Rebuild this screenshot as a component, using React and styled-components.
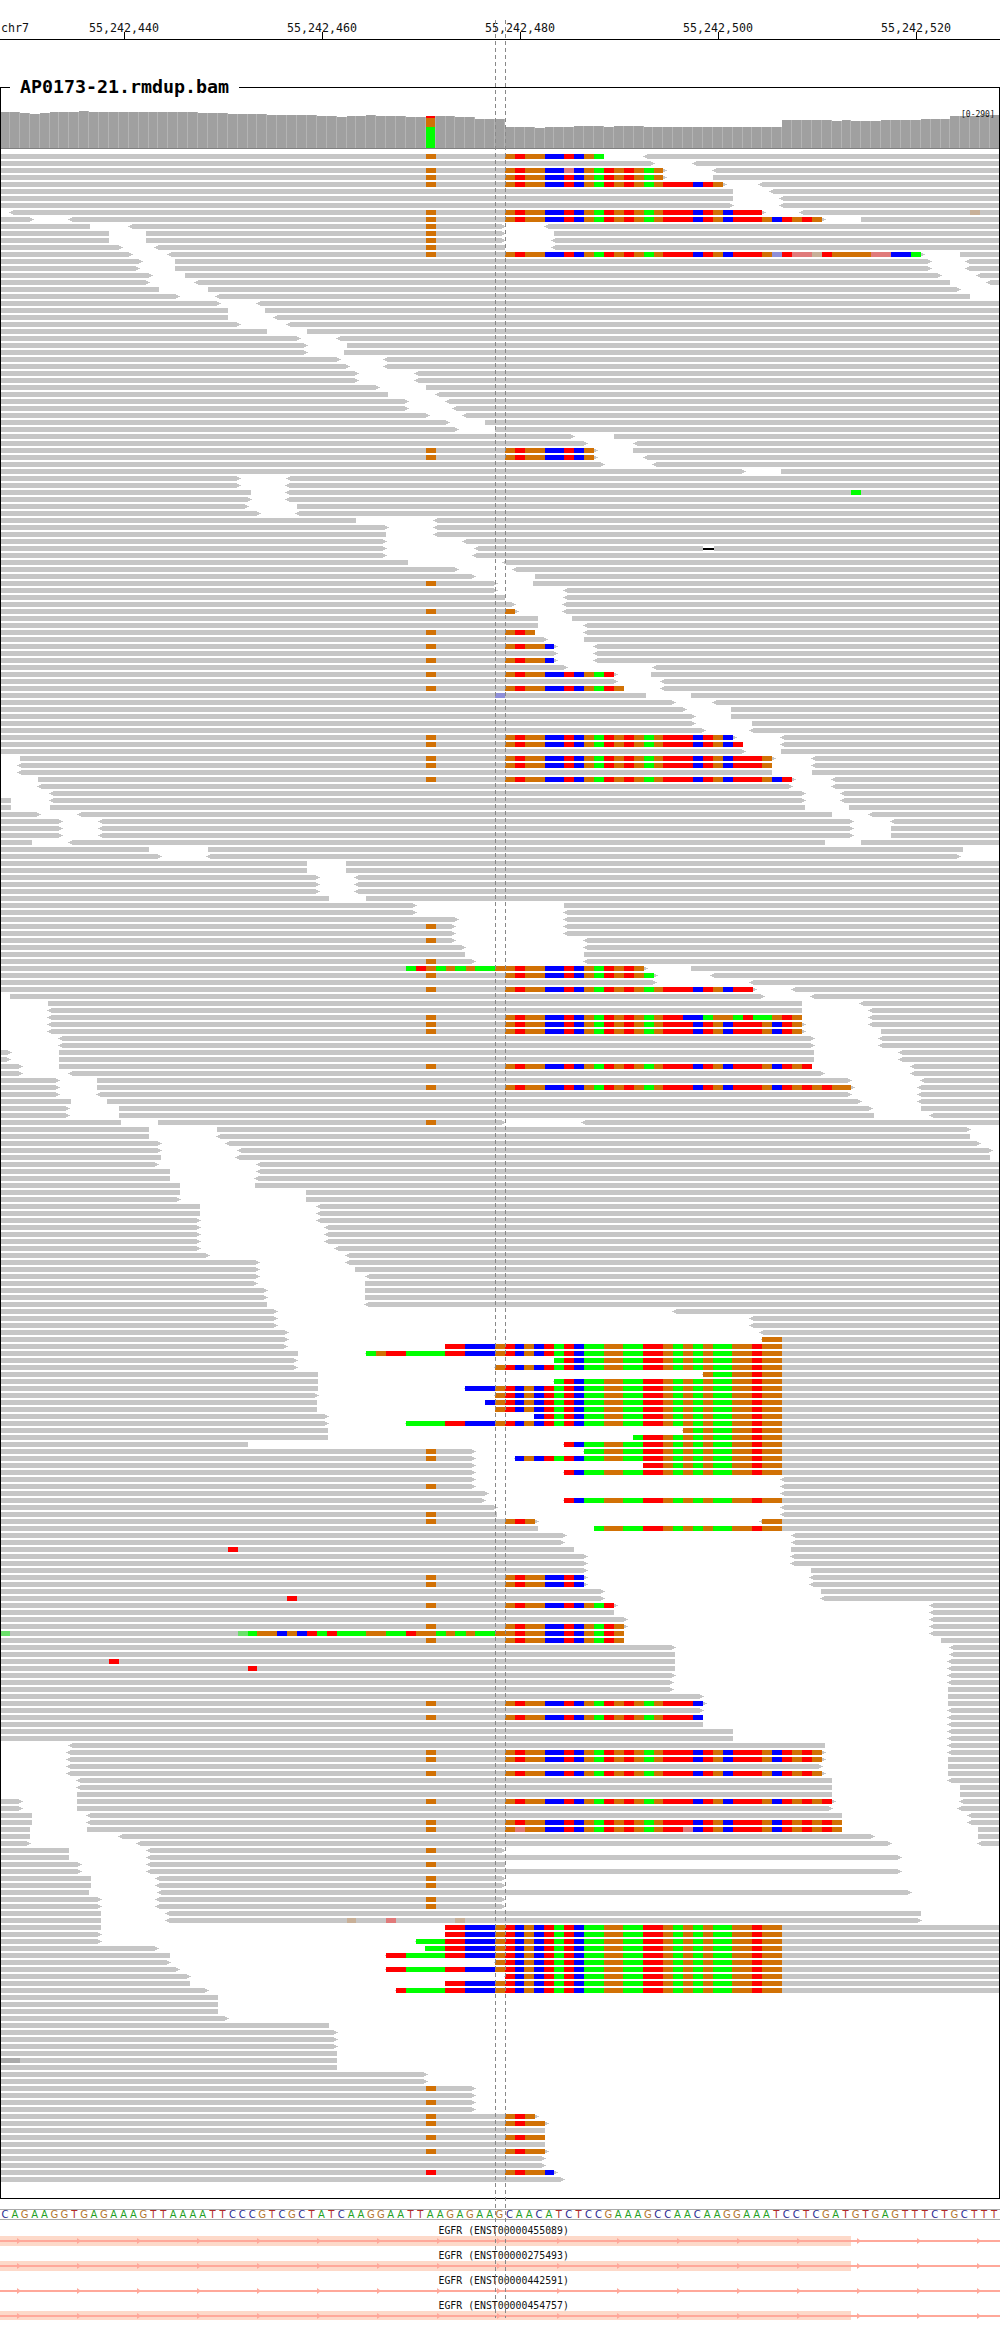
import React from "react";
import styled, { createGlobalStyle } from "styled-components";

const Global = createGlobalStyle`
  html, body { margin: 0; padding: 0; background: #fff; }
  body { font-family: "DejaVu Sans Mono", monospace; }
`;

const Page = styled.div`
  position: relative;
  width: 1000px;
  height: 2340px;
  overflow: hidden;
  background: #fff;
`;
const RulerChart = styled.svg`
  display: block;
  width: 1000px;
  height: 40px;
`;
const RulerText = styled.text`
  font: 11.63px "DejaVu Sans Mono", monospace;
  fill: #111;
`;
const Panel = styled.section`
  position: relative;
  box-sizing: border-box;
  width: 1000px;
  height: 2112px;
  margin-top: 47px;
  border: 1px solid #000;
`;
const PanelTitle = styled.h2`
  position: absolute;
  top: -13px;
  left: 9px;
  margin: 0;
  padding: 0 10px;
  background: #fff;
  font: bold 18.3px/24px "DejaVu Sans Mono", monospace;
  color: #000;
`;
const CoverageChart = styled.svg`
  display: block;
  width: 998px;
  height: 62px;
`;
const RangeLabel = styled.text`
  font: 8px "DejaVu Sans Mono", monospace;
  fill: #111;
`;
const ReadsChart = styled.svg`
  display: block;
  width: 998px;
  height: 2048px;
`;
const SeqTrack = styled.div`
  box-sizing: border-box;
  display: flex;
  width: 1000px;
  height: 11px;
  margin-top: 10px;
  border-top: 1px solid #aaa;
  border-bottom: 1px solid #aaa;
`;
const Base = styled.span`
  flex: 0 0 9.9px;
  text-align: center;
  font: 10px/9px "DejaVu Sans", sans-serif;
  color: ${(p) => p.$color};
`;
const GeneList = styled.div`
  display: flex;
  flex-direction: column;
  gap: 5px;
  margin-top: 6px;
`;
const GeneTrack = styled.div`
  display: flex;
  flex-direction: column;
`;
const GeneLabel = styled.div`
  height: 10px;
  padding-left: 438.5px;
  font: 9.85px/10px "DejaVu Sans Mono", monospace;
  color: #111;
  white-space: pre;
`;
const GeneChart = styled.svg`
  display: block;
  width: 1000px;
  height: 10px;
`;
const CursorOverlay = styled.svg`
  position: absolute;
  top: 0;
  left: 0;
  width: 1000px;
  height: 2340px;
  pointer-events: none;
`;

const C = {
  O: "#d17105",
  R: "#ff0000",
  B: "#0000ff",
  L: "#00ff00",
  P: "#e07a7a",
  N: "#c8b098",
  U: "#8f8fd8",
  D: "#aaaaaa",
  M: "#6be06b",
};

const A_SEQ = "OROOBBRBOLRO" + "ROLO" + "RRRBROB" + "RRRO" + "BROROR" + "OOOO";
const A_14 = "OROOBBRBOLRO" + "ROLO" + "RRRBROB" + "RRRO" + "URPPNR" + "OOOO" + "PPBBL";
const A_123 = "OROOBBRBOLROROLO" + "RRBBLOOLRLLORO";
const B_SEQ = "LORRLLLLRRBBBORBOBRLRBLLOOLLRROLOLOLLOORO" + "O";

const aOverride = {
  2: A_SEQ.slice(0, 6) + "P" + A_SEQ.slice(7),
  14: A_14,
  123: A_123,
  239: "OPOOBBRBOLROROLORRPBROBRRRO" + A_SEQ.slice(27),
};

const ROWS = [
  "947,1010 d a947", "1025,1087", "1040,1118 d a1040", "1040,1118 d a1040", "1134,1190 d a1134",
  "1149,1207", "1149,1223", "1149,1223", "0,16 1195,1254 d a1195", "52,108 1289,1350 d a1289",
  "141,202 792,855 d", "171,229 792,869 d", "171,229 792,866 d", "191,243 792,866 d", "207,263 1444,1505 d a1444",
  "223,274 1460,1515", "218,274 1460,1515", "238,290 1475,1532", "234,306 1490,1548", "250,326 1505,1568",
  "280,338 1521,1568", "345,403", "358,415", "358,430", "377,450",
  "419,481", "470,528", "481,544", "481,540", "533,602",
  "548,602", "562,650", "562,650", "594,668", "609,684",
  "640,699", "640,710", "672,726", "704,760", "718,776",
  "900,963", "920,994", "936,992 d a932", "936,1010 d a932", "947,1024",
  "1168,1224", "377,450", "377,448", "393,448", "393,448",
  "389,466", "407,464", "558,680", "609,680", "605,680",
  "605,726", "605,745", "605,742", "640,788", "718,804",
  "745,839", "779,836 d", "780,884", "792,884", "808,882",
  "808,882 d a808", "843,897", "843,916", "843,916 d a839", "858,916",
  "873,931 d a869", "873,931", "873,931 d a869", "889,1024", "967,1021 d a963",
  "967,1037", "983,1036 d a978", "1013,1084", "1059,1118", "1075,1146",
  "1090,1146", "1090,1179", "1106,1176", "1153,1224 d a1149", "1169,1224 d a1165",
  "1168,1224", "0,31 1214,1273 d a1210", "0,28 1210,1273 d a1210", "0,28 1210,1273", "0,60 1242,1305 d a1242",
  "0,60 1242,1305", "0,78 1262,1318", "18,78 1262,1318", "18,78 1262,1332", "63,122 1305,1363",
  "97,155 1338,1397", "97,155 1338,1397", "97,155 1338,1397", "50,108 1293,1350", "234,326 1510,1568",
  "252,324 1505,1568", "481,542", "481,542", "500,556", "500,556",
  "500,556", "516,574", "652,884", "652,884", "718,884",
  "713,884 d", "713,884", "713,916 d", "729,916", "729,915",
  "745,915 d", "1010,1084 a1010", "1028,1115 d a1025", "1028,1176", "1183,1242 d a1180",
  "0,16 1198,1272", "0,76 1258,1348", "0,76 1258,1363", "0,76 1258,1363 d a1258", "0,76 1258,1363 d a1258",
  "0,76 1258,1381 d a1258", "0,93 1277,1378", "0,93 1277,1378", "18,93 1277,1409", "16,93 1277,1409",
  "35,93 1277,1428 d a1273", "35,108 1292,1428", "93,152 1334,1444", "93,152 1334,1440 d a1334", "93,152 1334,1440",
  "112,168 1350,1440", "108,187 1368,1444", "108,187 1370,1458", "190,247 792,912 d", "234,340 1521,1568",
  "234,340 1521,1568", "252,355 1537,1568", "252,373 1556,1568", "252,370 1552,1568", "248,403",
  "266,403", "266,400", "283,400", "283,480", "283,480",
  "314,497", "314,497", "314,497", "314,510", "314,510",
  "314,510", "314,526", "328,542", "406,542", "406,556",
  "406,574", "403,572", "419,572", "419,572", "419,572",
  "434,1055", "434,1176", "434,1176", "452,1192", "452,1195 b1195",
  "450,699 b699", "468,574 b574", "466,869 b869", "466,776 b776", "499,1102 b1102",
  "499,869 b869", "499,729 b729", "499,776 b776", "497,760 b760", "497,776 b776",
  "515,839 b839", "515,637 b637", "515,1071 b1071", "515,994 b994", "389,884 b884",
  "745,916 d b916", "745,808 d b808", "745,1010 b1010", "745,884 b884", "745,1224",
  "745,1224 d", "765,1224", "760,884 b884", "779,1224", "779,1224 d",
  "843,1192 d a839 b1195", "843,931 b931", "887,1242", "884,1242", "900,1240",
  "920,1240", "920,1240", "920,1272", "916,1270 d a916", "916,1270 d a916",
  "947,1288", "947,1288", "967,1458 d a963", "963,1458", "983,1458",
  "978,1458 d a978", "978,1458 a978", "978,1475 d a978", "1059,1490", "1059,1490",
  "1059,1486", "1059,1486", "1059,1486", "1055,1486", "1055,1486",
  "1102,1486", "1102,1486 d a1102", "1102,1486", "1102,1486 d a1102", "1102,1486",
  "1149,1486", "1149,1486", "0,108 1293,1486", "0,105 1289,1486 d a1289", "0,105 1289,1486 d a1289",
  "0,105 1289,1486", "0,105 1289,1486 d a1289", "0,121 1305,1486", "0,121 1305,1505", "0,121 1305,1505",
  "35,121 1305,1505 d a1305", "35,121 1305,1502", "50,136 1320,1518", "50,136 1320,1518 d a1320", "47,136 1320,1533 d a1320",
  "47,187 1370,1533", "47,215 1397,1533", "108,230 792,1568 d", "108,230 1413,1568", "127,230 792,1568 d",
  "127,230 1413,1568", "143,245 792,1568 d", "143,245 792,1568 d", "140,248 1428,1568", "158,245 792,1568 d",
  "158,245 792,1568 d", "158,260 1444,1568", "158,260 1444,1568", "158,699 b699", "158,699 b699",
  "158,652 b652", "248,668 b668", "266,605 b605", "266,776 b776", "281,605 b605",
  "298,792 b792", "298,699 b699", "326,621 b621", "342,1568", "342,1568",
  "342,1568", "358,1568", "516,1568", "528,1568", "528,1568",
  "528,1568", "528,1568", "528,1568", "528,1568", "670,1568",
  "670,1568", "745,1568 d", "745,1568", "745,1568 d", "745,1568",
  "839,1568 d a839", "855,1568 d a855", "855,1568", "855,1568 d a855", "855,1568",
  "855,1568 d a855", "855,1568", "855,1568", "869,1568 e a869", "885,1568",
];

const EXTRAS = {
  8: [[1521, 1537, "N"]],
  48: [[1334, 1350, "L"]],
  56: [[1102, 1120, "k"]],
  77: [[776, 792, "U"]],
  116: [
    [637, 652, "L"], [652, 668, "R"], [668, 684, "O"], [684, 699, "L"], [699, 714, "O"],
    [714, 730, "L"], [730, 745, "O"], [745, 776, "L"], [776, 792, "O"],
  ],
  199: [[358, 373, "R"]],
  206: [[450, 466, "R"]],
  211: [
    [0, 16, "M"], [373, 389, "M"], [389, 403, "L"], [403, 434, "O"], [434, 450, "B"], [450, 466, "O"],
    [466, 481, "B"], [481, 497, "R"], [497, 513, "L"], [513, 528, "R"], [528, 574, "L"], [574, 605, "O"],
    [605, 637, "L"], [637, 652, "R"], [652, 684, "O"], [684, 699, "L"], [699, 714, "O"], [714, 730, "L"],
    [730, 745, "O"], [745, 776, "L"], [776, 792, "O"],
  ],
  215: [[171, 187, "R"]],
  216: [[389, 403, "R"]],
  252: [[544, 558, "N"], [605, 621, "P"], [713, 729, "N"]],
  272: [[0, 31, "D"]],
};

const zx = (z) => Math.round(z / 1.568);
const bx = (i, x0) => Math.round(x0 + 9.9 * i);

function parseRow(str) {
  const row = { gaps: [], dot: null, a: null, b: null };
  str.split(" ").forEach((t) => {
    if (t === "d") row.dot = "O";
    else if (t === "e") row.dot = "R";
    else if (t[0] === "a") row.a = +t.slice(1);
    else if (t[0] === "b") row.b = +t.slice(1);
    else row.gaps.push(t.split(",").map(Number));
  });
  return row;
}

function readPath(xs, xe, y, tl, tr) {
  let d = `M${xs} ${y}H${xe}`;
  if (tr) d += `V${y + 1}H${xe + 2}V${y + 2}H${xe + 4}V${y + 3}H${xe + 2}V${y + 4}H${xe}`;
  d += `V${y + 5}H${xs}`;
  if (tl) d += `V${y + 4}H${xs - 2}V${y + 3}H${xs - 4}V${y + 2}H${xs - 2}V${y + 1}H${xs}`;
  return d + "Z";
}

const parsed = ROWS.map(parseRow);

function buildReads() {
  let grey = "";
  const rects = [];
  const push = (x0, x1, y, k) => rects.push(<rect key={rects.length} x={x0} y={y} width={x1 - x0} height={5} fill={C[k]} />);
  parsed.forEach((row, r) => {
    const y = 154 + 7 * r;
    let cursor = 0;
    let cursorTip = false;
    row.gaps.forEach(([a, b]) => {
      if (a > 0) {
        let tr = (a * 7 + r) % 10 < 7;
        let xe = zx(a);
        if (row.a != null && Math.abs(row.a - a) <= 6) {
          xe = zx(row.a);
        } else if (tr) {
          xe -= 3;
        }
        const xs = zx(cursor) + (cursorTip ? 3 : 0);
        grey += readPath(xs, xe, y, cursorTip, tr);
      }
      cursor = b;
      cursorTip = b < 1568 && (b * 3 + r) % 10 < 7;
    });
    if (cursor < 1568) grey += readPath(zx(cursor) + (cursorTip ? 3 : 0), 1001, y, cursorTip, false);
    if (row.dot) push(426, 436, y, row.dot);
    if (row.a != null) {
      const n = Math.round((row.a - 792) / 15.52);
      const seq = aOverride[r] || A_SEQ;
      for (let i = 0; i < n; i++) {
        push(bx(i, 505), i === n - 1 ? zx(row.a) : bx(i + 1, 505), y, seq[i]);
      }
    }
    if (row.b != null) {
      const s = Math.round((row.b - 574) / 15.52);
      for (let i = s; i < 42; i++) push(bx(i, 366), bx(i + 1, 366), y, B_SEQ[i]);
    }
    (EXTRAS[r] || []).forEach(([z0, z1, k]) => {
      if (k === "k") {
        rects.push(<rect key={rects.length} x={zx(z0)} y={y - 1} width={zx(z1) - zx(z0)} height={7} fill="#fff" />);
        rects.push(<rect key={rects.length} x={zx(z0)} y={y + 2} width={zx(z1) - zx(z0)} height={2} fill="#000" />);
      } else {
        push(zx(z0), zx(z1), y, k);
      }
    });
  });
  return { grey, rects };
}

const COV = [
  336, 336, 340, 343, 340, 337, 337, 337, 333, 337,
  337, 337, 337, 337, 337, 337, 337, 337, 337, 337,
  340, 340, 340, 343, 343, 343, 343, 346, 346, 346,
  346, 346, 349, 349, 352, 349, 349, 346, 349, 349,
  349, 352, 352, 348, 349, 349, 352, 352, 358, 358,
  358, 381, 381, 381, 384, 381, 381, 381, 378, 378,
  378, 381, 378, 378, 378, 381, 381, 381, 381, 381,
  381, 381, 381, 381, 381, 381, 381, 381, 381, 361,
  361, 361, 361, 361, 364, 361, 364, 364, 364, 361,
  361, 361, 361, 358, 358, 358, 349, 349, 349, 346,
  346,
];

const TICKS = [
  [124, "55,242,440"],
  [322, "55,242,460"],
  [520, "55,242,480"],
  [718, "55,242,500"],
  [916, "55,242,520"],
];

const SEQUENCE =
  "CAGAAGGTGAGAAAGTTAAAATTCCCGTCGCTATCAAGGAATTAAGAGAAGCAACATCTCCGAAAGCCAACAAGGAAATCCTCGATGTGAGTTTCTGCTTTT".slice(0, 101);
const BASE_COLORS = { A: "#1fa01f", C: "#2a2a90", G: "#b4762f", T: "#b02a2a" };

const GENES = [
  { id: "ENST00000455089", band: 10 },
  { id: "ENST00000275493", band: 10 },
  { id: "ENST00000442591", band: 0 },
  { id: "ENST00000454757", band: 9 },
];

function Gene({ id, band }) {
  const arrows = [];
  for (let k = 0; k < 17; k++) {
    const x = 17 + 60 * k;
    arrows.push(<polygon key={k} points={`${x},2 ${x + 4},5 ${x},8`} fill="#ffa89a" />);
  }
  return (
    <GeneTrack>
      <GeneLabel>{`EGFR (${id})`}</GeneLabel>
      <GeneChart viewBox="0 0 1000 10">
        {band > 0 && <rect x="0" y="0" width="851" height={band} fill="#fdd9c9" />}
        <rect x="0" y="4" width="1000" height="2" fill="#ffa89a" />
        {arrows}
      </GeneChart>
    </GeneTrack>
  );
}

export default function App() {
  const { grey, rects } = React.useMemo(buildReads, []);
  return (
    <Page>
      <Global />
      <RulerChart viewBox="0 0 1000 40">
        <RulerText x="1" y="32">chr7</RulerText>
        {TICKS.map(([x, label]) => (
          <g key={x}>
            <RulerText x={x} y="32" textAnchor="middle">{label}</RulerText>
            <rect x={x} y="32" width="1" height="7" fill="#000" />
          </g>
        ))}
        <rect x="0" y="39" width="1000" height="1" fill="#000" />
      </RulerChart>
      <Panel>
        <PanelTitle>AP0173-21.rmdup.bam</PanelTitle>
        <CoverageChart viewBox="1 88 998 62" shapeRendering="crispEdges">
          {COV.map((t, i) => {
            const x = bx(i, 0);
            const w = bx(i + 1, 0) - x;
            const top = Math.round(t / 3);
            if (i === 43) {
              return (
                <g key={i}>
                  <rect x={x} y="116" width={w - 1} height="2" fill={C.R} />
                  <rect x={x} y="118" width={w - 1} height="9" fill={C.O} />
                  <rect x={x} y="127" width={w - 1} height="21" fill={C.L} />
                  <rect x={x + w - 1} y="116" width="1" height="32" fill="#b4b4b4" />
                </g>
              );
            }
            return (
              <g key={i}>
                <rect x={x} y={top} width={w - 1} height={148 - top} fill="#a0a0a0" />
                <rect x={x + w - 1} y={top} width="1" height={148 - top} fill="#b4b4b4" />
              </g>
            );
          })}
          <rect x="0" y="148" width="1000" height="1" fill="#808080" />
          <RangeLabel x="961" y="117" shapeRendering="auto">[0-290]</RangeLabel>
        </CoverageChart>
        <ReadsChart viewBox="1 150 998 2048" shapeRendering="crispEdges">
          <path d={grey} fill="#c6c6c6" />
          {rects}
        </ReadsChart>
      </Panel>
      <SeqTrack>
        {SEQUENCE.split("").map((b, i) => (
          <Base key={i} $color={BASE_COLORS[b]}>{b}</Base>
        ))}
      </SeqTrack>
      <GeneList>
        {GENES.map((g) => (
          <Gene key={g.id} {...g} />
        ))}
      </GeneList>
      <CursorOverlay viewBox="0 0 1000 2340">
        <line x1="495.5" y1="20" x2="495.5" y2="2318" stroke="#888" strokeWidth="1" strokeDasharray="4 3" />
        <line x1="505.5" y1="20" x2="505.5" y2="2318" stroke="#888" strokeWidth="1" strokeDasharray="4 3" />
      </CursorOverlay>
    </Page>
  );
}
